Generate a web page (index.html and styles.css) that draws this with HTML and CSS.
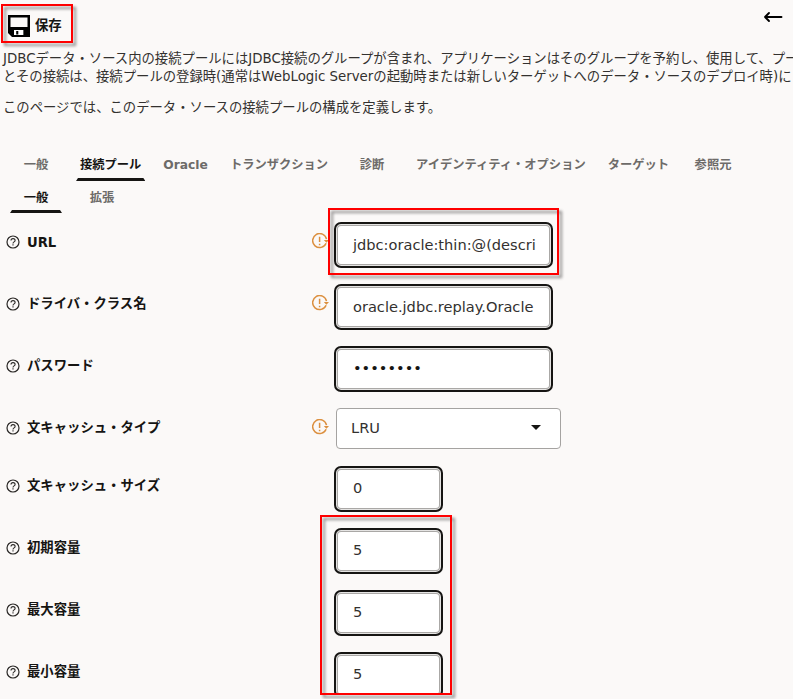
FILE: index.html
```html
<!DOCTYPE html>
<html lang="ja">
<head>
<meta charset="utf-8">
<title>接続プール</title>
<link rel="stylesheet" href="styles.css">
</head>
<body>
<svg class="defs" width="0" height="0">
  <symbol id="help" viewBox="0 0 14 14"><circle cx="7" cy="7" r="6" fill="none" stroke="#292725" stroke-width="1.2"/><path d="M5 5.6C5 2.9 9.1 3 9.1 5.4C9.1 7 7 6.8 7 8.5M7 9.3V10.5" fill="none" stroke="#292725" stroke-width="1.1"/></symbol>
  <symbol id="restart" viewBox="0 0 17 16"><path d="M14.1 10.3A7 7 0 1 1 14.5 6.1" fill="none" stroke="#dc9040" stroke-width="1.5"/><path d="M11.8 6.9H17L14.4 9.8Z" fill="#dc9040"/><path d="M7.6 3.8V9.1M7.6 10.7V12.3" stroke="#dc9040" stroke-width="1.5"/></symbol>
</svg>
<main class="page">
  <header class="toolbar">
    <button class="save">
      <svg width="22" height="22" viewBox="0 0 22 22"><path fill="#000" fill-rule="evenodd" d="M0 0H22V22H4L0 18ZM2.5 2.5V12H19.5V2.5ZM6 15V20H15.2V15Z"/><path fill="#fff" d="M6 15H15.2V20H6Z"/><path fill="#000" d="M8.2 16H10.3V19.5H8.2Z"/></svg>
      <span>保存</span>
    </button>
    <svg class="back" width="20" height="12" viewBox="0 0 20 12"><path d="M18.5 6H2M6 2L2 6L6 10" fill="none" stroke="#000" stroke-width="1.9" stroke-linecap="round" stroke-linejoin="round"/></svg>
  </header>
  <section class="intro">
    <p>JDBCデータ・ソース内の接続プールにはJDBC接続のグループが含まれ、アプリケーションはそのグループを予約し、使用して、プー<br>とその接続は、接続プールの登録時(通常はWebLogic Serverの起動時または新しいターゲットへのデータ・ソースのデプロイ時)に</p>
    <p>このページでは、このデータ・ソースの接続プールの構成を定義します。</p>
  </section>
  <nav class="tabs">
    <a>一般</a><a class="on">接続プール</a><a>Oracle</a><a>トランザクション</a><a>診断</a><a>アイデンティティ・オプション</a><a>ターゲット</a><a>参照元</a>
  </nav>
  <nav class="tabs sub"><a class="on">一般</a><a>拡張</a></nav>
  <form class="form">
    <div class="row"><svg class="help"><use href="#help"/></svg><label class="latin">URL</label><svg class="restart"><use href="#restart"/></svg><div class="field">jdbc:oracle:thin:@(descri</div></div>
    <div class="row"><svg class="help"><use href="#help"/></svg><label>ドライバ・クラス名</label><svg class="restart"><use href="#restart"/></svg><div class="field">oracle.jdbc.replay.Oracle</div></div>
    <div class="row"><svg class="help"><use href="#help"/></svg><label>パスワード</label><div class="field password">••••••••</div></div>
    <div class="row choice"><svg class="help"><use href="#help"/></svg><label>文キャッシュ・タイプ</label><svg class="restart"><use href="#restart"/></svg><div class="select">LRU<svg width="10" height="5" viewBox="0 0 10 5"><path d="M0 0H10L5 5Z" fill="#161513"/></svg></div></div>
    <div class="row"><svg class="help"><use href="#help"/></svg><label>文キャッシュ・サイズ</label><div class="field short">0</div></div>
    <div class="row"><svg class="help"><use href="#help"/></svg><label>初期容量</label><div class="field short">5</div></div>
    <div class="row"><svg class="help"><use href="#help"/></svg><label>最大容量</label><div class="field short">5</div></div>
    <div class="row"><svg class="help"><use href="#help"/></svg><label>最小容量</label><div class="field short">5</div></div>
  </form>
</main>
<div class="mark mark-save"></div>
<div class="mark mark-url"></div>
<div class="mark mark-capacity"></div>
</body>
</html>
```
FILE: styles.css
```css
* { box-sizing: border-box; }
body {
  margin: 0;
  height: 699px;
  overflow: hidden;
  background: #fbf9f8;
  color: #33312f;
  font: 13.35px/18px "DejaVu Sans", "Noto Sans CJK JP", sans-serif;
}
.defs { position: absolute; }
.page { height: 694px; overflow: hidden; }
.toolbar { display: flex; justify-content: space-between; height: 50px; padding: 0 10px 0 8px; }
.save {
  display: flex; align-items: center; gap: 5px;
  height: 22px; margin-top: 15px; padding: 0; border: 0; background: none;
  color: #161513; font: inherit; font-weight: bold;
}
.save span { margin-bottom: 1px; }
.back { margin-top: 11px; }
.intro { padding-left: 3px; white-space: nowrap; }
.intro p { margin: 0 0 13px; }
.intro p:last-child { margin: 0; }
.tabs {
  display: flex; gap: 14px; height: 33px; margin-top: 31px; padding-left: 10px;
  font-size: 12.27px; font-weight: bold; color: #6d6b69; white-space: nowrap;
}
.tabs.sub { height: 32px; margin-top: 0; }
.tabs a { display: flex; flex-direction: column; min-width: 52px; padding: 8px 4px 0; text-align: center; }
.tabs .on { color: #161513; }
.tabs .on::after {
  content: ""; height: 3px; margin: 4px -4px 0; background: #161513;
  clip-path: polygon(2px 0, calc(100% - 2px) 0, 100% 100%, 0 100%);
}
.tabs.sub .on::after { margin-top: 3px; }
.form { padding-top: 9px; }
.row { display: flex; align-items: flex-start; height: 62px; padding-left: 5px; }
.row.choice { height: 58px; }
.help { width: 14px; height: 14px; margin: 13px 0 0 .5px; }
.row label { flex: 0 0 285px; margin: 11px 0 0 7.5px; color: #161513; font-weight: bold; }
.row .latin { padding-top: 1px; font-size: 13.2px; }
.restart { width: 17px; height: 16px; margin-top: 11px; }
.field {
  width: 219px; height: 46px; margin-left: 5px; padding: 0 17px;
  border: 2px solid #161513; border-radius: 7px;
  background: #fff; box-shadow: inset 0 0 0 1px #e5e4e3, inset 0 0 0 2px #aaa8a6;
  font-size: 14.6px; line-height: 41px; white-space: nowrap; overflow: hidden;
}
label + .field { margin-left: 22px; }
.field.short { width: 109px; line-height: 40px; }
.password { color: #161513; line-height: 40px; }
.select {
  display: flex; align-items: center; justify-content: space-between;
  width: 225px; height: 41px; margin-left: 7px; padding: 0 19px 2px 14px;
  border: 1px solid #a5a3a1; border-radius: 4px; background: #fff;
  font-size: 14.6px;
}
.mark {
  position: absolute; border: 2px solid #f00;
  filter: drop-shadow(3px 3px 1.5px rgba(0, 0, 0, .45));
}
.mark-save { left: 1px; top: 4px; width: 72px; height: 39px; }
.mark-url { left: 328px; top: 208px; width: 231px; height: 67px; }
.mark-capacity { left: 320px; top: 515px; width: 132px; height: 180px; }
```
